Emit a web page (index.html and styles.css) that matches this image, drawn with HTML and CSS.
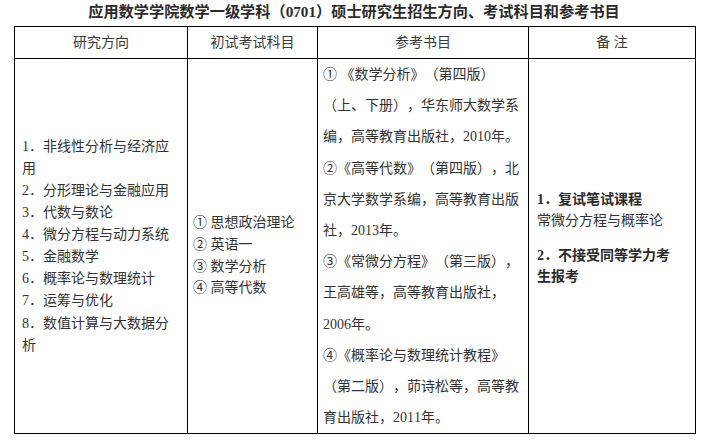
FILE: index.html
```html
<!DOCTYPE html>
<html lang="zh-CN">
<head>
<meta charset="utf-8">
<title>应用数学学院数学一级学科（0701）硕士研究生招生方向、考试科目和参考书目</title>
<link rel="stylesheet" href="styles.css">
</head>
<body>
<h1 class="title">应用数学学院数学一级学科（0701）硕士研究生招生方向、考试科目和参考书目</h1>
<table class="grid">
  <colgroup>
    <col class="c1"><col class="c2"><col class="c3"><col class="c4">
  </colgroup>
  <thead>
    <tr class="head">
      <th class="hcell">研究方向</th>
      <th class="hcell">初试考试科目</th>
      <th class="hcell">参考书目</th>
      <th class="hcell">备&nbsp;注</th>
    </tr>
  </thead>
  <tbody>
    <tr>
      <td class="cell dirs">
        1．非线性分析与经济应用<br>
        2．分形理论与金融应用<br>
        3．代数与数论<br>
        4．微分方程与动力系统<br>
        5．金融数学<br>
        6．概率论与数理统计<br>
        7．运筹与优化<br>
        8．数值计算与大数据分析
      </td>
      <td class="cell exams">
        ① 思想政治理论<br>
        ② 英语一<br>
        ③ 数学分析<br>
        ④ 高等代数
      </td>
      <td class="cell books">① 《数学分析》（第四版）（上、下册），华东师大数学系编，高等教育出版社，2010年。<br>②《高等代数》（第四版），北京大学数学系编，高等教育出版社，2013年。<br>③《常微分方程》（第三版），王高雄等，高等教育出版社，2006年。<br>④《概率论与数理统计教程》（第二版），茆诗松等，高等教育出版社，2011年。</td>
      <td class="cell notes">
        <p class="note"><b>1．复试笔试课程</b><br>常微分方程与概率论</p>
        <p class="note"><b>2．不接受同等学力考生报考</b></p>
      </td>
    </tr>
  </tbody>
</table>
</body>
</html>
```
FILE: styles.css
```css
html, body {
  margin: 0;
  padding: 0;
  background: #ffffff;
}

body {
  font-family: "Liberation Serif", "Noto Sans CJK SC", serif;
  color: #333333;
  font-size: 14px;
  text-spacing-trim: space-all;
  font-kerning: none;
}

.title {
  margin: 0;
  height: 26px;
  line-height: 24px;
  font-size: 15.2px;
  font-weight: bold;
  text-align: center;
  color: #2b2b2b;
}

.grid {
  margin-left: 14px;
  width: 681px;
  table-layout: fixed;
  border-collapse: collapse;
}

.c1 { width: 173px; }
.c2 { width: 130px; }
.c3 { width: 211px; }
.c4 { width: 167px; }

.hcell,
.cell {
  border: 1px solid #000000;
}

.hcell {
  height: 31px;
  padding: 0;
  font-weight: normal;
  text-align: center;
  vertical-align: middle;
  line-height: 20px;
  color: #3a3a3a;
}

.dirs {
  padding: 0 7px 0 7px;
  line-height: 22.1px;
  vertical-align: middle;
}

.exams {
  padding: 19px 4px 0 5px;
  line-height: 21.7px;
  vertical-align: middle;
}

.books {
  padding: 0 3px 0 5px;
  line-height: 31.2px;
  vertical-align: top;
}

.notes {
  padding: 0 14px 16px 8px;
  line-height: 21.5px;
  vertical-align: middle;
}

.note {
  margin: 0;
}

.note + .note {
  margin-top: 13px;
}

.note b {
  font-weight: bold;
  color: #2b2b2b;
}
```
